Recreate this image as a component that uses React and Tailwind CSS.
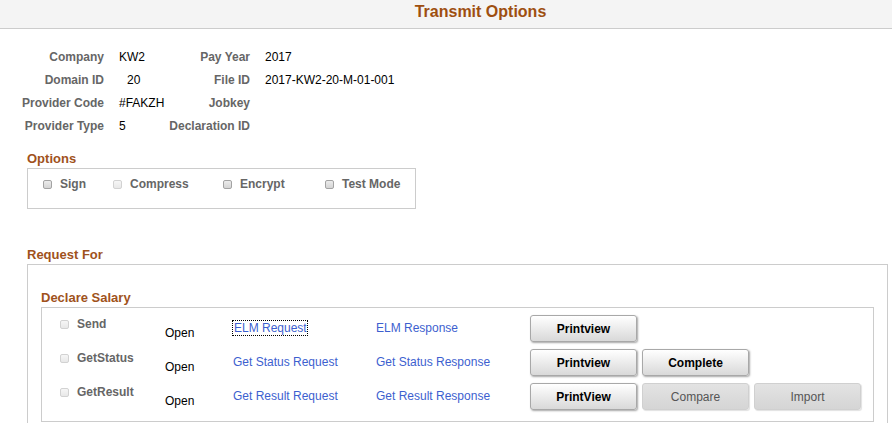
import React from 'react';

const fields = [
  ['Company', 'KW2', 'Pay Year', '2017'],
  ['Domain ID', '20', 'File ID', '2017-KW2-20-M-01-001'],
  ['Provider Code', '#FAKZH', 'Jobkey', ''],
  ['Provider Type', '5', 'Declaration ID', ''],
];

const options = [
  { label: 'Sign', enabled: true },
  { label: 'Compress', enabled: false },
  { label: 'Encrypt', enabled: true },
  { label: 'Test Mode', enabled: true },
];

const requests = [
  { name: 'Send', req: 'ELM Request', res: 'ELM Response', focus: true, buttons: [['Printview', true]] },
  { name: 'GetStatus', req: 'Get Status Request', res: 'Get Status Response', buttons: [['Printview', true], ['Complete', true]] },
  { name: 'GetResult', req: 'Get Result Request', res: 'Get Result Response', buttons: [['PrintView', true], ['Compare', false], ['Import', false]] },
];

function Checkbox({ enabled }) {
  return (
    <span
      className={
        enabled
          ? 'inline-block w-[9px] h-[9px] rounded-[2px] border border-[#a3a3a3] bg-linear-to-b from-[#ececec] to-[#d4d4d4]'
          : 'inline-block w-[9px] h-[9px] rounded-[2px] border border-[#d2d2d2] bg-linear-to-b from-[#f6f6f6] to-[#e8e8e8]'
      }
    />
  );
}

function Button({ label, enabled }) {
  return enabled ? (
    <button className="w-[107px] h-[27px] rounded-[3px] border border-[#a8a8a8] bg-linear-to-b from-white to-[#d9d9d9] shadow-[1px_1px_2px_rgba(0,0,0,0.35)] text-[12px] font-bold text-black">
      {label}
    </button>
  ) : (
    <button className="w-[107px] h-[27px] rounded-[3px] border border-[#d0d0d0] bg-linear-to-b from-[#e3e3e3] to-[#d5d5d5] shadow-[1px_1px_1px_rgba(0,0,0,0.12)] text-[12px] text-[#555]">
      {label}
    </button>
  );
}

export default function App() {
  return (
    <div className="w-[892px] h-[423px] overflow-hidden bg-white font-['Liberation_Sans',Arial,sans-serif] text-[12px] text-black">
      <div className="h-[29px] bg-[#f4f4f4] border-b border-[#cccccc] pl-[69px] text-center">
        <h1 className="text-[16px] leading-[24px] font-bold text-[#9e4f10]">Transmit Options</h1>
      </div>

      <div className="mt-[17px] grid grid-cols-[104px_61px_85px_1fr] auto-rows-[23px] leading-[23px]">
        {fields.map(([l1, v1, l2, v2]) => (
          <React.Fragment key={l1}>
            <div className="text-right font-bold text-[#666]">{l1}</div>
            <div className={l1 === 'Domain ID' ? 'pl-[23px]' : 'pl-[15px]'}>{v1}</div>
            <div className="text-right font-bold text-[#666] whitespace-nowrap">{l2}</div>
            <div className="pl-[15px]">{v2}</div>
          </React.Fragment>
        ))}
      </div>

      <div className="mt-[13px] ml-[27px] h-[16px] leading-[16px] text-[13px] font-bold text-[#a0521c]">Options</div>
      <div className="mt-[1px] ml-[27px] w-[389px] h-[41px] border border-[#cccccc] pt-[8px] pl-[15px] grid grid-cols-[70px_110px_102px_1fr] content-start leading-[14px]">
        {options.map((o) => (
          <div key={o.label} className="flex items-center gap-[8px] h-[14px]">
            <Checkbox enabled={o.enabled} />
            <span className="font-bold text-[#666]">{o.label}</span>
          </div>
        ))}
      </div>

      <div className="mt-[38px] ml-[27px] h-[16px] leading-[16px] text-[13px] font-bold text-[#a0521c]">Request For</div>
      <div className="mt-[1px] ml-[27px] w-[861px] h-[200px] border border-[#cccccc] pt-[25px] pl-[13px]">
        <div className="h-[16px] leading-[16px] text-[13px] font-bold text-[#a0521c]">Declare Salary</div>
        <div className="mt-[1px] w-[833px] border border-[#cccccc] pt-[7px] pb-[11px] flex flex-col gap-[7px]">
          {requests.map((r) => (
            <div key={r.name} className="h-[27px] grid grid-cols-[123px_67px_144px_154px_1fr]">
              <div className="pl-[18px] flex items-center gap-[8px] h-[18px]">
                <Checkbox enabled={false} />
                <span className="font-bold text-[#666]">{r.name}</span>
              </div>
              <div className="mt-[11px] leading-[14px]">Open</div>
              <div className="mt-[6px] leading-[14px]">
                <span className={r.focus ? 'text-[#3d5fcf] border border-dotted border-black pl-[1px]' : 'text-[#3d5fcf] pl-[1px]'}>
                  {r.req}
                </span>
              </div>
              <div className="mt-[6px] leading-[14px] text-[#3d5fcf]">{r.res}</div>
              <div className="flex gap-[5px]">
                {r.buttons.map(([b, en]) => (
                  <Button key={b} label={b} enabled={en} />
                ))}
              </div>
            </div>
          ))}
        </div>
      </div>
    </div>
  );
}
